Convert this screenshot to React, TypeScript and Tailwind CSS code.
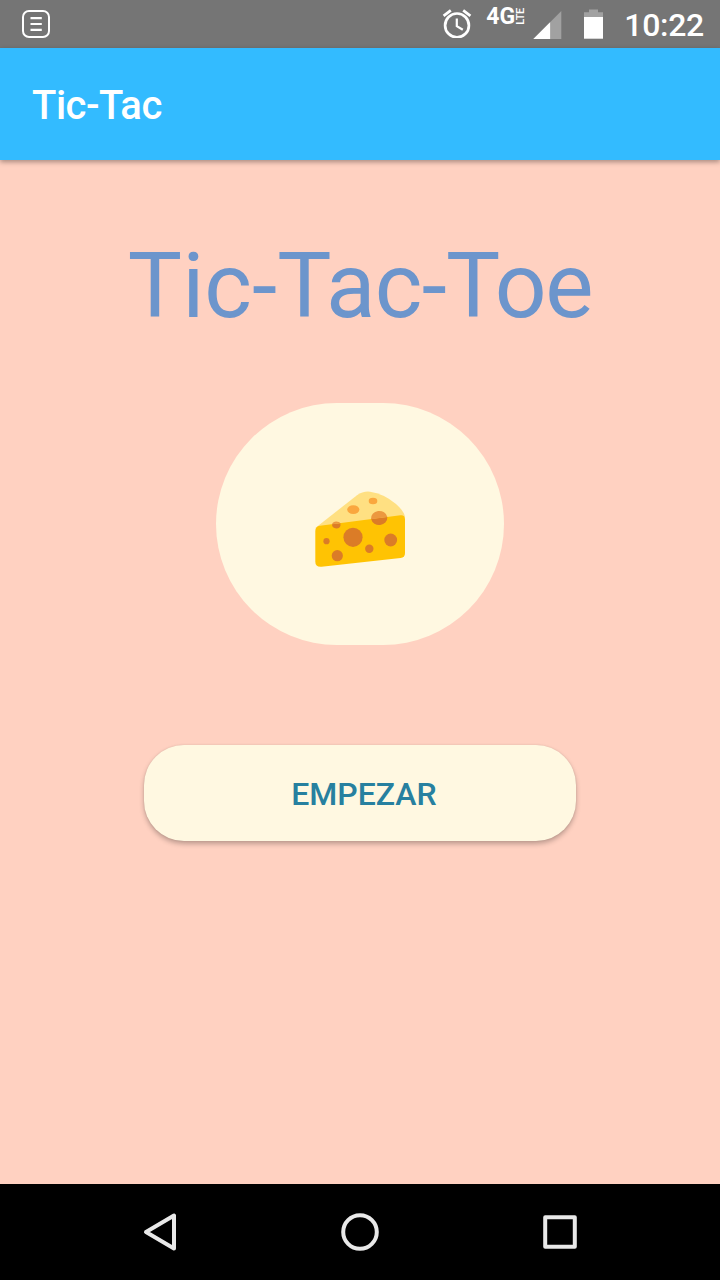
function NoteIcon() {
  return (
    <svg className="block h-7 w-7" viewBox="0 0 28 28" fill="none" stroke="#fff">
      <rect x="1" y="1" width="26" height="26" rx="6" strokeWidth="2" />
      <path d="M8.5 8.2H19.8M8.5 14H19.8M8.5 19.8H19.8" strokeWidth="2.2" />
    </svg>
  );
}

function AlarmIcon() {
  return (
    <svg className="block h-[30px] w-[30px]" viewBox="0 0 30 30" fill="none" stroke="#fff">
      <circle cx="15" cy="17.4" r="11.9" strokeWidth="2.7" />
      <path d="M1.6 7.8L8.8 2.4M28.4 7.8L21.2 2.4" strokeWidth="2.8" />
      <path d="M14.8 10.4V18.2L20.8 21.8" strokeWidth="2.2" />
    </svg>
  );
}

function SignalIcon() {
  return (
    <svg className="block h-7 w-[29px]" viewBox="0 0 29 28">
      <path d="M28.3 0V28H0.3Z" fill="#a1a1a1" />
      <path d="M17.1 11.2V28H0.3Z" fill="#fff" />
    </svg>
  );
}

function BatteryIcon() {
  return (
    <svg className="block h-[30px] w-[19px]" viewBox="0 0 19 30">
      <path d="M0 3.2H5V0.5H14V3.2H19V9H0Z" fill="#a1a1a1" />
      <path d="M0 8H19V29.7H0Z" fill="#fff" />
    </svg>
  );
}

function Cheese() {
  return (
    <svg className="block h-[78px] w-[92px]" viewBox="314 490 92 78">
      <path d="M315.3 528L357 495.2Q363 491 370 491.7Q384 493.7 396 504Q404 511 405 517L402 522L320 531Z" fill="#ffe082" />
      <path d="M320 525.8L400.5 515.2Q405 514.8 405 519.5V553Q405 557.3 400.5 558L321.5 566.8Q315.3 567.3 315.3 561.5V531Q315.3 526.5 320 525.8Z" fill="#ffc303" />
      <ellipse cx="353.3" cy="509.6" rx="6.1" ry="4.3" fill="#faa73e" />
      <ellipse cx="373" cy="501" rx="4.3" ry="3.2" fill="#faa73e" />
      <g fill="#db7c27">
        <circle cx="353" cy="537.3" r="9.6" />
        <circle cx="390.7" cy="540" r="6.4" />
        <circle cx="369.3" cy="548.7" r="4.2" />
        <circle cx="337.3" cy="555.7" r="5.6" />
        <circle cx="326.5" cy="541.2" r="3.1" />
        <path d="M371.1 519.1L387.3 517A8.2 7.6 0 0 1 371.1 519.1Z" />
        <path d="M332 524.3L340.5 523.2Q341 528.5 336.2 528.5Q332 528.3 332 524.3Z" />
      </g>
      <g fill="#ec983f">
        <path d="M371 519.2A8.3 7.6 0 0 1 387.4 517Z" />
        <path d="M332 524.3Q333 521.6 336.2 521.6Q339.6 521.6 340.5 523.2Z" />
      </g>
    </svg>
  );
}

export default function App() {
  return (
    <div className="flex h-[1280px] w-[720px] flex-col overflow-hidden bg-[#ffd1c1] font-['Roboto',sans-serif]">
      <header className="flex h-12 shrink-0 items-start bg-[#757575] pl-[22px] pr-4 text-white">
        <div className="mt-[10px]">
          <NoteIcon />
        </div>
        <div className="ml-auto flex items-start">
          <div className="mt-2">
            <AlarmIcon />
          </div>
          <div className="ml-[14px] mt-[6px] flex w-[39px] items-start">
            <span className="w-[30px] shrink-0 text-[23px] font-bold leading-[22px]">4G</span>
            <span className="mt-[2px] text-[11px] font-medium leading-[9px] tracking-[-0.3px] [writing-mode:sideways-lr]">LTE</span>
          </div>
          <div className="ml-[8px] mt-[11px]">
            <SignalIcon />
          </div>
          <div className="ml-[22px] mt-[9px]">
            <BatteryIcon />
          </div>
          <span className="ml-[21px] mt-[5px] text-[32px] font-medium leading-10 tracking-[-0.3px]">10:22</span>
        </div>
      </header>

      <div className="relative flex h-28 shrink-0 items-center bg-[#33bbff] px-8 shadow-[0_2px_5px_rgba(0,0,0,0.35)]">
        <h1 className="pt-1 text-[40px] font-medium leading-[48px] tracking-[-0.5px] text-white">Tic-Tac</h1>
      </div>

      <main className="flex grow flex-col items-center">
        <h2 className="mt-[72px] flex text-[91px] font-normal leading-[108px] text-[#6c95cc]">
          <span className="tracking-[0.1px]">Tic-</span>
          <span className="tracking-[-0.7px]">Tac-</span>
          <span className="tracking-[-1.3px]">Toe</span>
        </h2>
        <div className="mt-[63px] flex h-[242px] w-72 items-center justify-center rounded-full bg-[#fff8e1]">
          <div className="pt-[10px]">
            <Cheese />
          </div>
        </div>
        <button className="mt-[100px] h-24 w-[432px] rounded-[40px] bg-[#fff8e1] pl-2 pt-[2px] text-[32px] font-medium text-[#27809f] shadow-[0_3px_5px_rgba(0,0,0,0.25),0_0_2px_rgba(0,0,0,0.1)]">
          EMPEZAR
        </button>
      </main>

      <nav className="flex h-24 shrink-0 items-center justify-center gap-[160px] bg-black">
        <svg className="block h-10 w-10" viewBox="0 0 40 40" fill="none" stroke="#e9e9e9" strokeWidth="4" strokeLinejoin="round">
          <path d="M34 3.5V36.5L6 20Z" />
        </svg>
        <svg className="block h-10 w-10" viewBox="0 0 40 40" fill="none" stroke="#e9e9e9" strokeWidth="4">
          <circle cx="20" cy="20" r="16.8" />
        </svg>
        <svg className="block h-10 w-10" viewBox="0 0 40 40" fill="none" stroke="#e9e9e9" strokeWidth="4" strokeLinejoin="round">
          <rect x="5.2" y="5.2" width="29.6" height="29.6" />
        </svg>
      </nav>
    </div>
  );
}
